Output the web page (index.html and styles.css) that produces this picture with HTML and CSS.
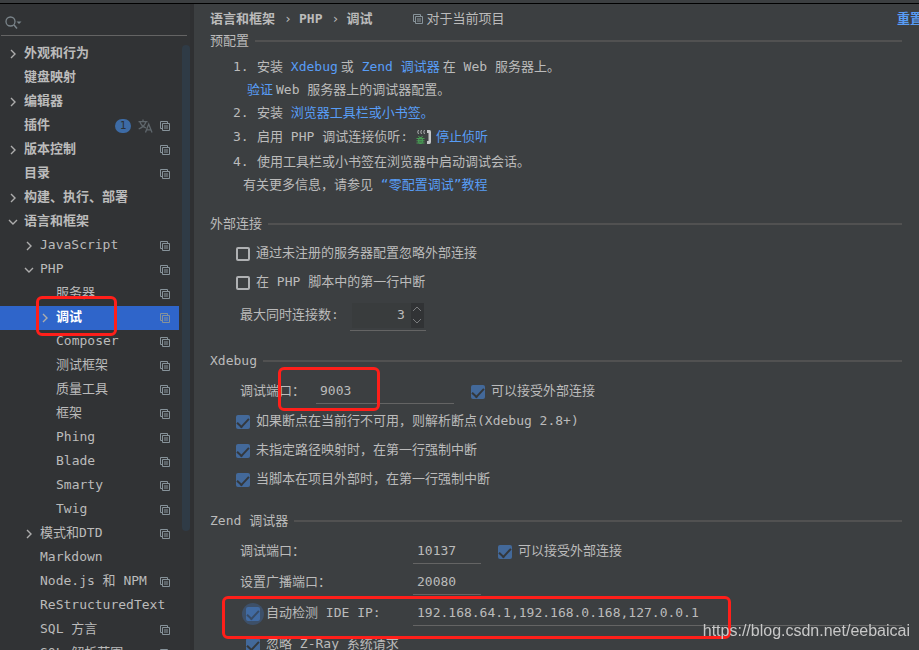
FILE: index.html
```
<!DOCTYPE html>
<html lang="zh-CN">
<head>
  <meta charset="UTF-8">
  <title>调试</title>
  <link rel="stylesheet" href="styles.css">
</head>
<body>
  <svg class="sprite" aria-hidden="true">
    <symbol id="copy" viewBox="0 0 10 10">
      <path d="M2.5 7.5H.5V.5h7v2" fill="none" stroke="currentColor"/>
      <path d="M2.5 2.5h7v7h-7zM4 5h4M4 7h4" fill="none" stroke="currentColor"/>
    </symbol>
    <symbol id="right" viewBox="0 0 10 10">
      <path d="M3 1l4 4-4 4" fill="none" stroke="currentColor" stroke-width="1.4"/>
    </symbol>
    <symbol id="down" viewBox="0 0 10 10">
      <path d="M1 3l4 4 4-4" fill="none" stroke="currentColor" stroke-width="1.4"/>
    </symbol>
  </svg>

  <div class="titlebar"></div>
  <div class="dialog">
    <aside class="sidebar">
      <div class="search">
        <svg width="18" height="14" viewBox="0 0 18 14">
          <circle cx="5.5" cy="5.5" r="4.5" fill="none" stroke="#7b858b" stroke-width="1.3"/>
          <path d="M9 9l3 3.4" stroke="#7b858b" stroke-width="1.5"/>
          <path d="M11.5 5.5h5L14 8z" fill="#7b858b"/>
        </svg>
        <input type="text" aria-label="搜索">
      </div>
      <div class="tree-wrap">
        <ul class="tree">
          <li class="top"><svg class="arrow"><use href="#right"/></svg><span>外观和行为</span></li>
          <li class="top"><i class="arrow"></i><span>键盘映射</span></li>
          <li class="top"><svg class="arrow"><use href="#right"/></svg><span>编辑器</span></li>
          <li class="top"><i class="arrow"></i><span>插件</span>
            <b class="count">1</b>
            <svg class="lang" viewBox="0 0 15 14" fill="none" stroke="#5f676c" stroke-width="1.3">
              <path d="M.5 2.6h9M5 .5v2M2 3c1 3 3.500 5 6 6M7.800 3C7 6 4 8.500.700 10M7.500 13.500L10.700 5l3.300 8.500M8.700 10.800h4.200"/>
            </svg>
            <svg class="copy"><use href="#copy"/></svg></li>
          <li class="top"><svg class="arrow"><use href="#right"/></svg><span>版本控制</span><svg class="copy"><use href="#copy"/></svg></li>
          <li class="top"><i class="arrow"></i><span>目录</span><svg class="copy"><use href="#copy"/></svg></li>
          <li class="top"><svg class="arrow"><use href="#right"/></svg><span>构建、执行、部署</span></li>
          <li class="top"><svg class="arrow"><use href="#down"/></svg><span>语言和框架</span></li>
          <li class="sub"><svg class="arrow"><use href="#right"/></svg><span>JavaScript</span><svg class="copy"><use href="#copy"/></svg></li>
          <li class="sub"><svg class="arrow"><use href="#down"/></svg><span>PHP</span><svg class="copy"><use href="#copy"/></svg></li>
          <li class="leaf"><i class="arrow"></i><span>服务器</span><svg class="copy"><use href="#copy"/></svg></li>
          <li class="leaf selected"><svg class="arrow"><use href="#right"/></svg><span>调试</span><svg class="copy"><use href="#copy"/></svg><div class="mark mark-tree"></div></li>
          <li class="leaf"><i class="arrow"></i><span>Composer</span><svg class="copy"><use href="#copy"/></svg></li>
          <li class="leaf"><i class="arrow"></i><span>测试框架</span><svg class="copy"><use href="#copy"/></svg></li>
          <li class="leaf"><i class="arrow"></i><span>质量工具</span><svg class="copy"><use href="#copy"/></svg></li>
          <li class="leaf"><i class="arrow"></i><span>框架</span><svg class="copy"><use href="#copy"/></svg></li>
          <li class="leaf"><i class="arrow"></i><span>Phing</span><svg class="copy"><use href="#copy"/></svg></li>
          <li class="leaf"><i class="arrow"></i><span>Blade</span><svg class="copy"><use href="#copy"/></svg></li>
          <li class="leaf"><i class="arrow"></i><span>Smarty</span><svg class="copy"><use href="#copy"/></svg></li>
          <li class="leaf"><i class="arrow"></i><span>Twig</span><svg class="copy"><use href="#copy"/></svg></li>
          <li class="sub"><svg class="arrow"><use href="#right"/></svg><span>模式和DTD</span><svg class="copy"><use href="#copy"/></svg></li>
          <li class="sub"><i class="arrow"></i><span>Markdown</span></li>
          <li class="sub"><i class="arrow"></i><span>Node.js 和 NPM</span><svg class="copy"><use href="#copy"/></svg></li>
          <li class="sub"><i class="arrow"></i><span>ReStructuredText</span></li>
          <li class="sub"><i class="arrow"></i><span>SQL 方言</span><svg class="copy"><use href="#copy"/></svg></li>
          <li class="sub"><i class="arrow"></i><span>SQL 解析范围</span><svg class="copy"><use href="#copy"/></svg></li>
        </ul>
        <div class="scrollbar"></div>
      </div>
    </aside>

    <main class="content">
      <header class="crumbs">
        <b>语言和框架</b><span class="sep">›</span><b>PHP</b><span class="sep">›</span><b>调试</b>
        <span class="scope"><svg class="copy"><use href="#copy"/></svg>对于当前项目</span>
        <a class="reset" href="#">重置</a>
      </header>

      <section class="pre">
        <h2>预配置</h2>
        <ol class="steps">
          <li>安装 <a href="#">Xdebug</a><span class="gap">或</span> <a href="#">Zend 调试器</a><span class="gap">在</span> Web 服务器上。
            <p class="verify"><a href="#">验证</a><span class="gap">Web</span> 服务器上的调试器配置。</p></li>
          <li>安装 <a href="#">浏览器工具栏或小书签。</a></li>
          <li class="listen">启用 PHP 调试连接侦听:
            <svg class="phone" width="16" height="16" viewBox="0 0 16 16">
              <path d="M2.500 1q-1.500 2 0 4M5.500 1q-1.500 2 0 4M8.500 1q-1.500 2 0 4" fill="none" stroke="#afb1b3"/>
              <path d="M11 1h2.500q1.500 0 1.500 2v10q0 2-1.500 2H11v-3h1.500V4H11z" fill="#c4c6c8"/>
              <ellipse cx="4.500" cy="11.500" rx="2.500" ry="3.500" fill="#499c54"/>
              <path d="M.5 9.500h8M.5 11.800h8M.5 14h8M2.500 7l1 1.500M6.500 7l-1 1.500" stroke="#499c54"/>
              <path d="M3 10.600h3M3 12.900h3" stroke="#3c3f41" stroke-width=".6"/>
            </svg><a href="#">停止侦听</a></li>
          <li>使用工具栏或小书签在浏览器中启动调试会话。
            <p class="more">有关更多信息，请参见 <a href="#">“零配置调试”教程</a></p></li>
        </ol>
      </section>

      <section class="external">
        <h2>外部连接</h2>
        <label class="check"><input type="checkbox">通过未注册的服务器配置忽略外部连接</label>
        <label class="check"><input type="checkbox">在 PHP 脚本中的第一行中断</label>
        <div class="field max">
          <label for="max">最大同时连接数:</label>
          <div class="spinner">
            <input id="max" type="text" value="3">
            <div class="steppers">
              <button type="button" aria-label="增加"><svg viewBox="0 0 10 6"><path d="M1 5l4-4 4 4"/></svg></button>
              <button type="button" aria-label="减少"><svg viewBox="0 0 10 6"><path d="M1 1l4 4 4-4"/></svg></button>
            </div>
          </div>
        </div>
      </section>

      <section class="xdebug">
        <h2>Xdebug</h2>
        <div class="field">
          <label for="xport">调试端口：</label>
          <input id="xport" class="line xport" type="text" value="9003">
          <label class="check"><input type="checkbox" checked>可以接受外部连接</label>
          <div class="mark mark-port"></div>
        </div>
        <label class="check"><input type="checkbox" checked>如果断点在当前行不可用，则解析断点(Xdebug 2.8+)</label>
        <label class="check"><input type="checkbox" checked>未指定路径映射时，在第一行强制中断</label>
        <label class="check"><input type="checkbox" checked>当脚本在项目外部时，在第一行强制中断</label>
      </section>

      <section class="zend">
        <h2>Zend 调试器</h2>
        <div class="field">
          <label for="zport">调试端口：</label>
          <input id="zport" class="line short" type="text" value="10137">
          <label class="check"><input type="checkbox" checked>可以接受外部连接</label>
        </div>
        <div class="field">
          <label for="bport">设置广播端口：</label>
          <input id="bport" class="line short" type="text" value="20080">
        </div>
        <div class="field">
          <label class="check"><input class="focused" type="checkbox" checked>自动检测 IDE IP:</label>
          <input class="line wide" type="text" value="192.168.64.1,192.168.0.168,127.0.0.1" aria-label="IDE IP">
          <div class="mark mark-ip"></div>
        </div>
        <div class="field">
          <label class="check"><input type="checkbox" checked>忽略 Z-Ray 系统请求</label>
        </div>
      </section>
    </main>
  </div>
  <div class="watermark">https://blog.csdn.net/eebaicai</div>
</body>
</html>
```
FILE: styles.css
```
* {
  box-sizing: border-box;
}
body {
  margin: 0;
  height: 100vh;
  overflow: hidden;
  display: flex;
  flex-direction: column;
  background: #3c3f41;
  color: #bbbbbb;
  font: 13px/24px "DejaVu Sans Mono", "Noto Sans CJK SC", monospace;
}
input, button {
  font: inherit;
  color: inherit;
  margin: 0;
  padding: 0;
  border: 0;
  background: none;
  outline: none;
}
a {
  color: #589df6;
  text-decoration: none;
}
ul, ol, p, h2 {
  margin: 0;
  padding: 0;
  list-style: none;
}
.sprite {
  position: absolute;
  width: 0;
  height: 0;
}
.titlebar {
  flex: none;
  height: 4px;
  border-bottom: 1px solid #000;
}
.dialog {
  flex: 1;
  min-height: 0;
  display: flex;
}

/* sidebar */
.sidebar {
  flex: none;
  width: 194px;
  display: flex;
  flex-direction: column;
  background: #313335;
  border-right: 4px solid #2f3032;
}
.search {
  flex: none;
  display: flex;
  align-items: center;
  height: 32px;
  margin: 0 3px 6px 1px;
  padding: 6px 0 0 4px;
  border-bottom: 1px solid #646464;
}
.search input {
  flex: 1;
  min-width: 0;
}
.tree-wrap {
  flex: 1;
  min-height: 0;
  display: flex;
  gap: 3px;
}
.tree {
  flex: 1;
}
.tree li {
  position: relative;
  display: flex;
  align-items: center;
  height: 24px;
  padding-right: 9px;
  white-space: nowrap;
}
.tree span {
  flex: 1;
  padding-bottom: 2px;
}
.tree .top {
  padding-left: 8px;
  font-weight: bold;
}
.tree .sub {
  padding-left: 24px;
}
.tree .leaf {
  padding-left: 40px;
}
.tree .selected {
  background: #2f65ca;
  color: #fff;
  font-weight: bold;
}
.arrow {
  flex: none;
  width: 10px;
  height: 10px;
  margin-right: 6px;
  color: #adadad;
}
.copy {
  flex: none;
  width: 10px;
  height: 10px;
  color: #87939a;
}
.count {
  width: 16px;
  height: 14px;
  border-radius: 7px;
  background: #3d6ba5;
  color: #2c3136;
  font-size: 11px;
  font-weight: normal;
  line-height: 14px;
  text-align: center;
}
.lang {
  width: 15px;
  height: 14px;
  margin: 0 7px;
}
.scrollbar {
  width: 8px;
  height: 80%;
  margin-top: 3px;
  border-radius: 4px;
  background: #2f3b46;
}

/* right side */
.content {
  flex: 1;
  min-width: 0;
  padding: 3px 17px 0 16px;
  white-space: nowrap;
}
.crumbs {
  display: flex;
  align-items: center;
  margin-right: -21px;
}
.sep {
  width: 24px;
  padding-left: 2px;
  text-align: center;
}
.scope {
  display: flex;
  align-items: center;
  gap: 4px;
  margin-left: 40px;
}
.reset {
  margin-left: auto;
  font-weight: bold;
}
h2 {
  display: flex;
  align-items: center;
  gap: 6px;
  font-size: 13px;
  font-weight: normal;
  line-height: 20px;
}
h2::after {
  content: "";
  flex: 1;
  height: 2px;
  background: #515151;
}

.steps {
  padding: 4px 0 0 23px;
  line-height: 23px;
  counter-reset: step;
}
.steps li {
  padding-left: 24px;
  counter-increment: step;
}
.steps li::before {
  content: counter(step) ".";
  float: left;
  width: 24px;
  margin-left: -24px;
}
.steps .gap {
  margin-left: 3px;
}
.steps .verify {
  margin-left: -10px;
}
.steps .more {
  margin-left: -14px;
}
.steps .listen {
  display: flex;
  align-items: center;
  height: 25px;
  margin-bottom: 1px;
}
.phone {
  margin: 0 4px 0 8px;
}

.external {
  margin-top: 18px;
}
.external h2, .xdebug h2, .zend h2 {
  margin-bottom: 5px;
}
.check {
  display: flex;
  align-items: center;
  height: 29px;
  padding-bottom: 2px;
}
section > .check {
  margin-left: 26px;
}
.check input {
  appearance: none;
  flex: none;
  display: flex;
  justify-content: center;
  width: 14px;
  height: 14px;
  margin: 2px 6px 0 0;
  border: 2px solid #afb1b3;
  border-radius: 2px;
}
.check input:checked {
  border: 0;
  background: #43699a;
}
.check input:checked::before {
  content: "";
  width: 10px;
  height: 5px;
  margin-top: 3px;
  border: solid #34383c;
  border-width: 0 0 2px 2px;
  transform: rotate(-47deg);
}
.check .focused {
  position: relative;
}
.check .focused::after {
  content: "";
  position: absolute;
  inset: -4px;
  border-radius: 50%;
  background: rgba(62, 112, 180, 0.35);
}
.field {
  position: relative;
  display: flex;
  align-items: center;
  height: 31px;
  margin-left: 30px;
}
.field > label:not(.check) {
  padding-bottom: 2px;
}
.line {
  height: 25px;
  padding: 0 0 2px 4px;
  border-bottom: 1px solid #646464;
}
.max {
  height: 37px;
}
.spinner {
  display: flex;
  width: 76px;
  height: 30px;
  margin-left: 11px;
  padding: 2px;
  border-bottom: 1px solid #646464;
}
.spinner input {
  flex: 1;
  min-width: 0;
  padding-right: 6px;
  background: #393c3d;
  text-align: right;
}
.steppers {
  display: flex;
  flex-direction: column;
  width: 13px;
  background: #313335;
}
.steppers button {
  flex: 1;
  display: flex;
  align-items: center;
  justify-content: center;
}
.steppers svg {
  width: 10px;
  height: 6px;
  fill: none;
  stroke: #7b7d7f;
}
.xdebug {
  margin-top: 17px;
}
.xdebug .xport {
  width: 138px;
  margin: 0 17px 0 11px;
}
.zend {
  margin-top: 17px;
}
.zend .field > label:first-child {
  width: 173px;
}
.zend .short {
  width: 68px;
  margin-right: 17px;
}
.zend .wide {
  flex: 1;
  min-width: 0;
}
.zend .field > .check:first-child {
  padding-left: 6px;
}

/* red frames over the settings that matter */
.mark {
  position: absolute;
  border: 3px solid #ff1f1a;
  border-radius: 6px;
  z-index: 1;
}
.mark-tree {
  left: 36px;
  top: -10px;
  width: 81px;
  height: 40px;
}
.mark-port {
  left: 38px;
  top: -9px;
  width: 102px;
  height: 44px;
}
.mark-ip {
  left: -18px;
  top: -2px;
  width: 509px;
  height: 43px;
}
.watermark {
  position: fixed;
  right: 9px;
  bottom: 7px;
  z-index: 2;
  color: #c8c8c8;
  font-family: "Liberation Sans", Arial, sans-serif;
  font-size: 16px;
}
```
